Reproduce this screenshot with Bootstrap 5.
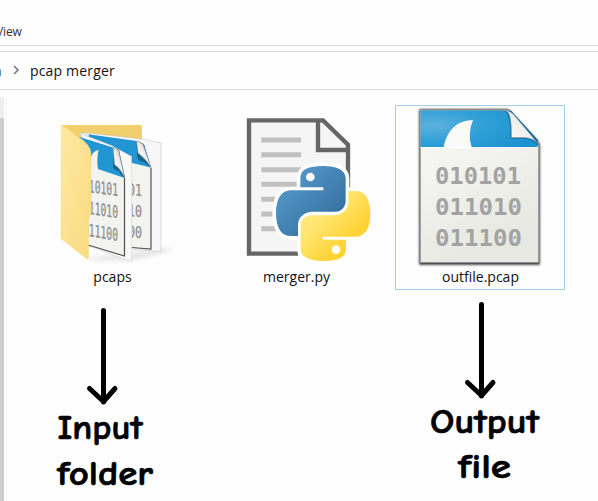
<!DOCTYPE html>
<html lang="en">
<head>
<meta charset="utf-8">
<meta name="viewport" content="width=device-width, initial-scale=1">
<title>pcap merger</title>
<link rel="stylesheet" href="https://cdn.jsdelivr.net/npm/bootstrap@5.3.0/dist/css/bootstrap.min.css">
<style>
body{font-family:"Segoe UI","Open Sans","Noto Sans",sans-serif;color:#111;width:598px;height:501px;background:#fefefe}
.menu-strip{height:46px;border-bottom:1px solid #d9d9d9;font-size:12px;line-height:18px;padding-top:23px}
.menu-strip span{margin-left:-4px;letter-spacing:-.1px;color:#333}
.path-strip{height:39px;margin-top:5px;border-top:1px solid #d9d9d9;border-bottom:1px solid #d9d9d9;font-size:14px}
.path-strip .parent{margin-left:-7px;width:8px}
.path-strip .here{letter-spacing:.17px;margin-left:10px}
.path-strip svg{margin:-2px 0 0 11px}
.side-rail{width:4px;margin-top:7px;background:linear-gradient(#eee 21px,#cdcdcd 21px)}
.side-line{width:1px;margin:7px 20px 0 2px;background:#f4f4f4}
.files{gap:14px;padding-top:15px}
.tile{width:170px;height:185px;border:1px solid transparent}
.tile.picked{border-color:#a3cfe6}
.tile svg{width:168px;height:162px;flex:none}
.tile span{font-size:14px;line-height:19px;margin-top:-1px;padding-left:1px}
.note{width:170px;height:211px}
.hand{font-family:"Comic Sans MS","Comic Neue","Lato",sans-serif;font-weight:700;font-size:35px;fill:#000;stroke:#000;stroke-width:.7}
.bits{font-family:"DejaVu Sans Mono",monospace;font-weight:700;fill:#a3a3a3}
.bits.slim{font-weight:400;fill:#8d8d8d;stroke:#9a9a9a;stroke-width:.4}
</style>
<script src="https://cdn.jsdelivr.net/npm/bootstrap@5.3.0/dist/js/bootstrap.bundle.min.js"></script>
</head>
<body class="d-flex flex-column overflow-hidden">
<div class="menu-strip flex-shrink-0"><span>View</span></div>
<nav class="path-strip d-flex align-items-center flex-shrink-0">
  <span class="parent">n</span>
  <svg width="8" height="10" viewBox="0 0 8 10"><path d="M2 1l4 4-4 4" fill="none" stroke="#777" stroke-width="1.6"/></svg>
  <span class="here">pcap merger</span>
</nav>
<main class="d-flex flex-grow-1">
  <div class="side-rail flex-shrink-0"></div>
  <div class="side-line flex-shrink-0"></div>
  <div class="files d-flex flex-shrink-0">
    <section>
      <div class="tile d-flex flex-column align-items-center">
        <svg viewBox="28 106 168 162">
          <defs>
            <linearGradient id="fold" x1="0" y1="0" x2="1" y2="1"><stop offset="0" stop-color="#fee9a2"/><stop offset="1" stop-color="#f9da80"/></linearGradient>
            <linearGradient id="curl" x1="0" y1="1" x2="1" y2="0"><stop offset="0" stop-color="#fff"/><stop offset=".5" stop-color="#f0f0ee"/><stop offset="1" stop-color="#aaa"/></linearGradient>
            <filter id="soft" x="-20%" y="-20%" width="140%" height="140%"><feGaussianBlur stdDeviation="2"/></filter>
            <clipPath id="backClip"><path d="M132 160H151V250H132Z"/></clipPath>
            <clipPath id="frontClip"><path d="M91 150H125V256H88V219L91 213Z"/></clipPath>
          </defs>
          <path d="M88 258l72-10 14 2-42 11-44-1z" fill="#bbb" opacity=".35" filter="url(#soft)"/>
          <path d="M62 125H140Q142 125 142 127V240H70Z" fill="#f1cf6c"/>
          <path d="M84 132.500L142 139 161 143V251.500L130 249Z" fill="#f7f7f7" stroke="#bbb" stroke-width=".5"/>
          <path d="M100 138L136 141 151 168V249H132V160Z" fill="#f3f3f0"/>
          <path d="M80 135.500L90 134.500 136.500 141 151 167.500 130 162.500V154L110 147Z" fill="#2196d3"/>
          <path d="M136.500 141L144 144 151 167.500Q147 165 144 162 136 161 137 154Z" fill="#16658f"/>
          <path d="M136.500 141L143 144 151 167.500Q146 159 138 153Z" fill="url(#curl)" stroke="#888" stroke-width=".6"/>
          <path d="M151 168V249L132 247.500" fill="none" stroke="#555" stroke-width="1.200"/>
          <g class="bits slim" font-size="16" clip-path="url(#backClip)"><text transform="matrix(1 .08 0 1 128 195)" textLength="14" lengthAdjust="spacingAndGlyphs">01</text><text transform="matrix(1 .08 0 1 128 216)" textLength="14" lengthAdjust="spacingAndGlyphs">10</text><text transform="matrix(1 .08 0 1 128 237)" textLength="14" lengthAdjust="spacingAndGlyphs">00</text></g>
          <path d="M80 133.500L113 146 131.500 156V261.500L88 246V150Z" fill="#f9f9f9" stroke="#ccc" stroke-width=".5"/>
          <path d="M84 134L90 134.500 131 149V156L113 146Z" fill="#2196d3"/>
          <path d="M80 133.500L89 134.500 88 137 112 146" fill="#eee" stroke="#ddd" stroke-width=".8"/>
          <path d="M88 138L112 148 124.500 178V255.500L88 245Z" fill="#f3f3ef"/>
          <path d="M78 136.500L113 147.500 124.500 178 98 169Q96.500 159 98.500 150 93 151 91 157Z" fill="#2196d3"/>
          <path d="M113 147.500L119 150 125 178Q120 175 119 171 112 170 113 165Z" fill="#16658f"/>
          <path d="M113 147.500L118.500 150 124.500 177Q120 168 114.500 164.500Z" fill="url(#curl)" stroke="#888" stroke-width=".6"/>
          <path d="M124.500 178V256L88 245" fill="none" stroke="#555" stroke-width="1.300"/>
          <g class="bits slim" font-size="17" clip-path="url(#frontClip)"><text transform="matrix(1 .13 0 1 83 191.500)" textLength="35" lengthAdjust="spacingAndGlyphs">010101</text><text transform="matrix(1 .15 0 1 83 213)" textLength="35" lengthAdjust="spacingAndGlyphs">011010</text><text transform="matrix(1 .17 0 1 83 235)" textLength="35" lengthAdjust="spacingAndGlyphs">011100</text></g>
          <path d="M61.500 125L78 136.500Q91 145 91 154V213L88.500 219V258Q88 260 84.500 257L61 238.500Z" fill="url(#fold)" stroke="#f3d67e" stroke-width=".5"/>
        </svg>
        <span>pcaps</span>
      </div>
      <svg class="note d-block" viewBox="27 290 170 211">
        <path d="M103.500 310.500V402M89.500 388.500L103.500 401.500 115 388.500" fill="none" stroke="#000" stroke-width="5" stroke-linecap="round" stroke-linejoin="round"/>
        <g class="hand"><text x="57.500" y="439" textLength="85" lengthAdjust="spacingAndGlyphs">Input</text><text x="57" y="484.500" textLength="96" lengthAdjust="spacingAndGlyphs">folder</text></g>
      </svg>
    </section>
    <section>
      <div class="tile d-flex flex-column align-items-center">
        <svg viewBox="212 106 168 162">
          <defs>
            <linearGradient id="pyBlue" x1="0" y1="0" x2="1" y2="1"><stop offset="0" stop-color="#5aa1d3"/><stop offset=".95" stop-color="#306998"/></linearGradient>
            <linearGradient id="pyGold" x1="1" y1="1" x2="0" y2="0"><stop offset=".3" stop-color="#ffe778"/><stop offset=".7" stop-color="#ffd335"/></linearGradient>
            <path id="snake" d="M265 168C220 168 196 178 196 205V232H265V241H168C139 241 123 266 123 310C123 355 140 378 165 378H189V345C189 321 210 305 232 305H300C320 305 332 290 332 272V205C332 180 305 168 265 168Z"/>
          </defs>
          <g transform="translate(235 110) scale(.33333)">
            <path d="M42 31H264L339 104V431H42Z" fill="#f5f5f5" stroke="#666" stroke-width="13"/>
            <path d="M249 34V120H338" fill="none" stroke="#666" stroke-width="13"/>
            <path d="M79 90H198M79 134H198M79 179H198M79 223H198M79 268H198M79 312H198M79 356H198" stroke="#c0c0c0" stroke-width="15"/>
            <path d="M189 378H350V445H189Z" fill="#fefefe"/>
            <g fill="#fefefe" stroke="#fefefe" stroke-width="22" stroke-linejoin="round"><use href="#snake"/><use href="#snake" transform="rotate(180 264.5 310.5)"/></g>
            <use href="#snake" fill="url(#pyBlue)"/>
            <use href="#snake" transform="rotate(180 264.5 310.5)" fill="url(#pyGold)"/>
            <circle cx="226" cy="201" r="13" fill="#fff"/><circle cx="303" cy="419" r="13" fill="#fff"/>
          </g>
        </svg>
        <span>merger.py</span>
      </div>
    </section>
    <section>
      <div class="tile picked d-flex flex-column align-items-center">
        <svg viewBox="396 106 168 162">
          <defs>
            <linearGradient id="paper" x1="0" y1="0" x2=".4" y2="1"><stop offset="0" stop-color="#fafaf8"/><stop offset="1" stop-color="#e8e8e2"/></linearGradient>
            <radialGradient id="glow" cx=".1" cy=".4" r=".9"><stop offset="0" stop-color="#5cb2dd"/><stop offset=".5" stop-color="#309fd7"/><stop offset="1" stop-color="#1c93d1"/></radialGradient>
            <filter id="edge" x="-10%" y="-10%" width="120%" height="120%"><feGaussianBlur stdDeviation="1"/></filter>
          </defs>
          <path d="M420 110H508L539 144V264H420Z" fill="#333" stroke="#333" stroke-width="1.500" filter="url(#edge)"/>
          <path d="M420.500 110.500H509L538.500 145V262.500H420.500Z" fill="url(#paper)"/>
          <path d="M420.500 110.500H508L537.500 142V147.500H420.500Z" fill="url(#glow)"/>
          <path d="M443.500 148.500C446.500 131 456 120.500 473 120Q467 134 472 148.500Z" fill="#fafaf8"/>
          <path d="M420.500 147.500H537.500" stroke="#fff"/>
          <path d="M504 110.500Q510.500 113 510.500 138.500H524Q534 139 538 146V140L511 110.500Z" fill="#126b9b"/>
          <path d="M504 110.300C509 111 511.500 115 511.500 137.500H520C530 137.500 534 139 538.700 144.500L514 115C511 112 508 110.300 504 110.300Z" fill="url(#curl)" stroke="#999" stroke-width=".6"/>
          <g class="bits" font-size="23.500"><text x="435" y="183.500" textLength="86" lengthAdjust="spacingAndGlyphs">010101</text><text x="435" y="214.500" textLength="87" lengthAdjust="spacingAndGlyphs">011010</text><text x="435" y="245.500" textLength="87" lengthAdjust="spacingAndGlyphs">011100</text></g>
        </svg>
        <span>outfile.pcap</span>
      </div>
      <svg class="note d-block" viewBox="395 290 170 211">
        <path d="M481.500 304.500V396M467.500 382.500L481.500 395.500 493 382.500" fill="none" stroke="#000" stroke-width="5" stroke-linecap="round" stroke-linejoin="round"/>
        <g class="hand"><text x="430" y="432.500" textLength="109" lengthAdjust="spacingAndGlyphs">Output</text><text x="458" y="478" textLength="53" lengthAdjust="spacingAndGlyphs">file</text></g>
      </svg>
    </section>
  </div>
</main>
</body>
</html>
